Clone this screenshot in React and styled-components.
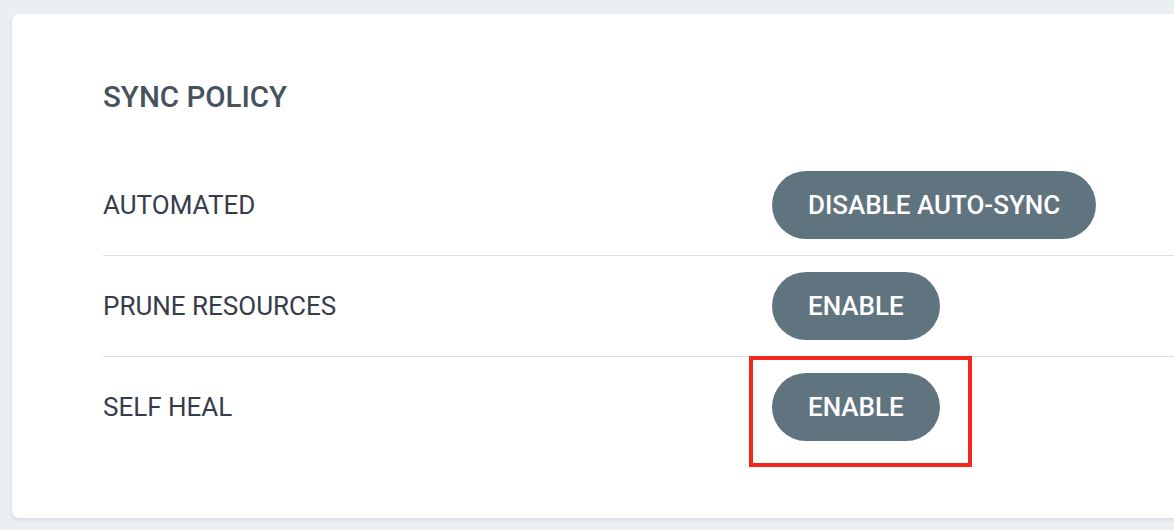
import React from "react";
import styled, { createGlobalStyle } from "styled-components";

const GlobalStyle = createGlobalStyle`
  html, body {
    margin: 0;
    padding: 0;
    background: #eaeff2;
    overflow: hidden;
  }
  body {
    font-family: "Roboto", "Liberation Sans", sans-serif;
  }
`;

const rows = [
  { label: "AUTOMATED", action: "DISABLE AUTO-SYNC" },
  { label: "PRUNE RESOURCES", action: "ENABLE" },
  { label: "SELF HEAL", action: "ENABLE", marked: true },
];

const App = () => {
  return (
    <>
      <GlobalStyle />
      <Page>
        <Card>
          <Title>SYNC POLICY</Title>
          <RowList>
            {rows.map((row, i) => (
              <Row key={row.label} first={i === 0}>
                <Label>{row.label}</Label>
                <ActionCell>
                  <PillButton>{row.action}</PillButton>
                  {row.marked && <Highlight />}
                </ActionCell>
              </Row>
            ))}
          </RowList>
        </Card>
      </Page>
    </>
  );
};

export default App;

const Page = styled.div`
  width: 1174px;
  height: 530px;
  padding: 14px 0 0 12px;
  box-sizing: border-box;
`;

const Card = styled.div`
  width: 1260px;
  height: 504px;
  box-sizing: border-box;
  background: #ffffff;
  border-radius: 7px;
  box-shadow: 0 2px 4px rgba(60, 80, 100, 0.12);
  padding: 67px 0 0 91px;
`;

const Title = styled.h2`
  margin: 0;
  font-family: "Roboto", "Liberation Sans", sans-serif;
  font-weight: 500;
  font-size: 29.5px;
  line-height: 32px;
  color: #46525e;
`;

const RowList = styled.div`
  margin-top: 41px;
`;

const Row = styled.div`
  display: grid;
  grid-template-columns: 669px auto;
  align-items: center;
  height: 101px;
  box-sizing: border-box;
  border-top: ${({ first }) => (first ? "none" : "1px solid #d6dfe7")};
`;

const Label = styled.div`
  font-family: "Roboto", "Liberation Sans", sans-serif;
  font-weight: 400;
  font-size: 26px;
  color: #363c4a;
`;

const ActionCell = styled.div`
  position: relative;
  display: flex;
  align-items: center;
`;

const PillButton = styled.button`
  height: 68px;
  padding: 0 36px;
  border: none;
  border-radius: 34px;
  background: #607480;
  color: #ffffff;
  font-family: "Roboto", "Liberation Sans", sans-serif;
  font-weight: 500;
  font-size: 26px;
  cursor: pointer;
`;

const Highlight = styled.div`
  position: absolute;
  left: -23px;
  top: -17px;
  width: 223px;
  height: 111px;
  box-sizing: border-box;
  border: 4px solid #f5261b;
  pointer-events: none;
`;
